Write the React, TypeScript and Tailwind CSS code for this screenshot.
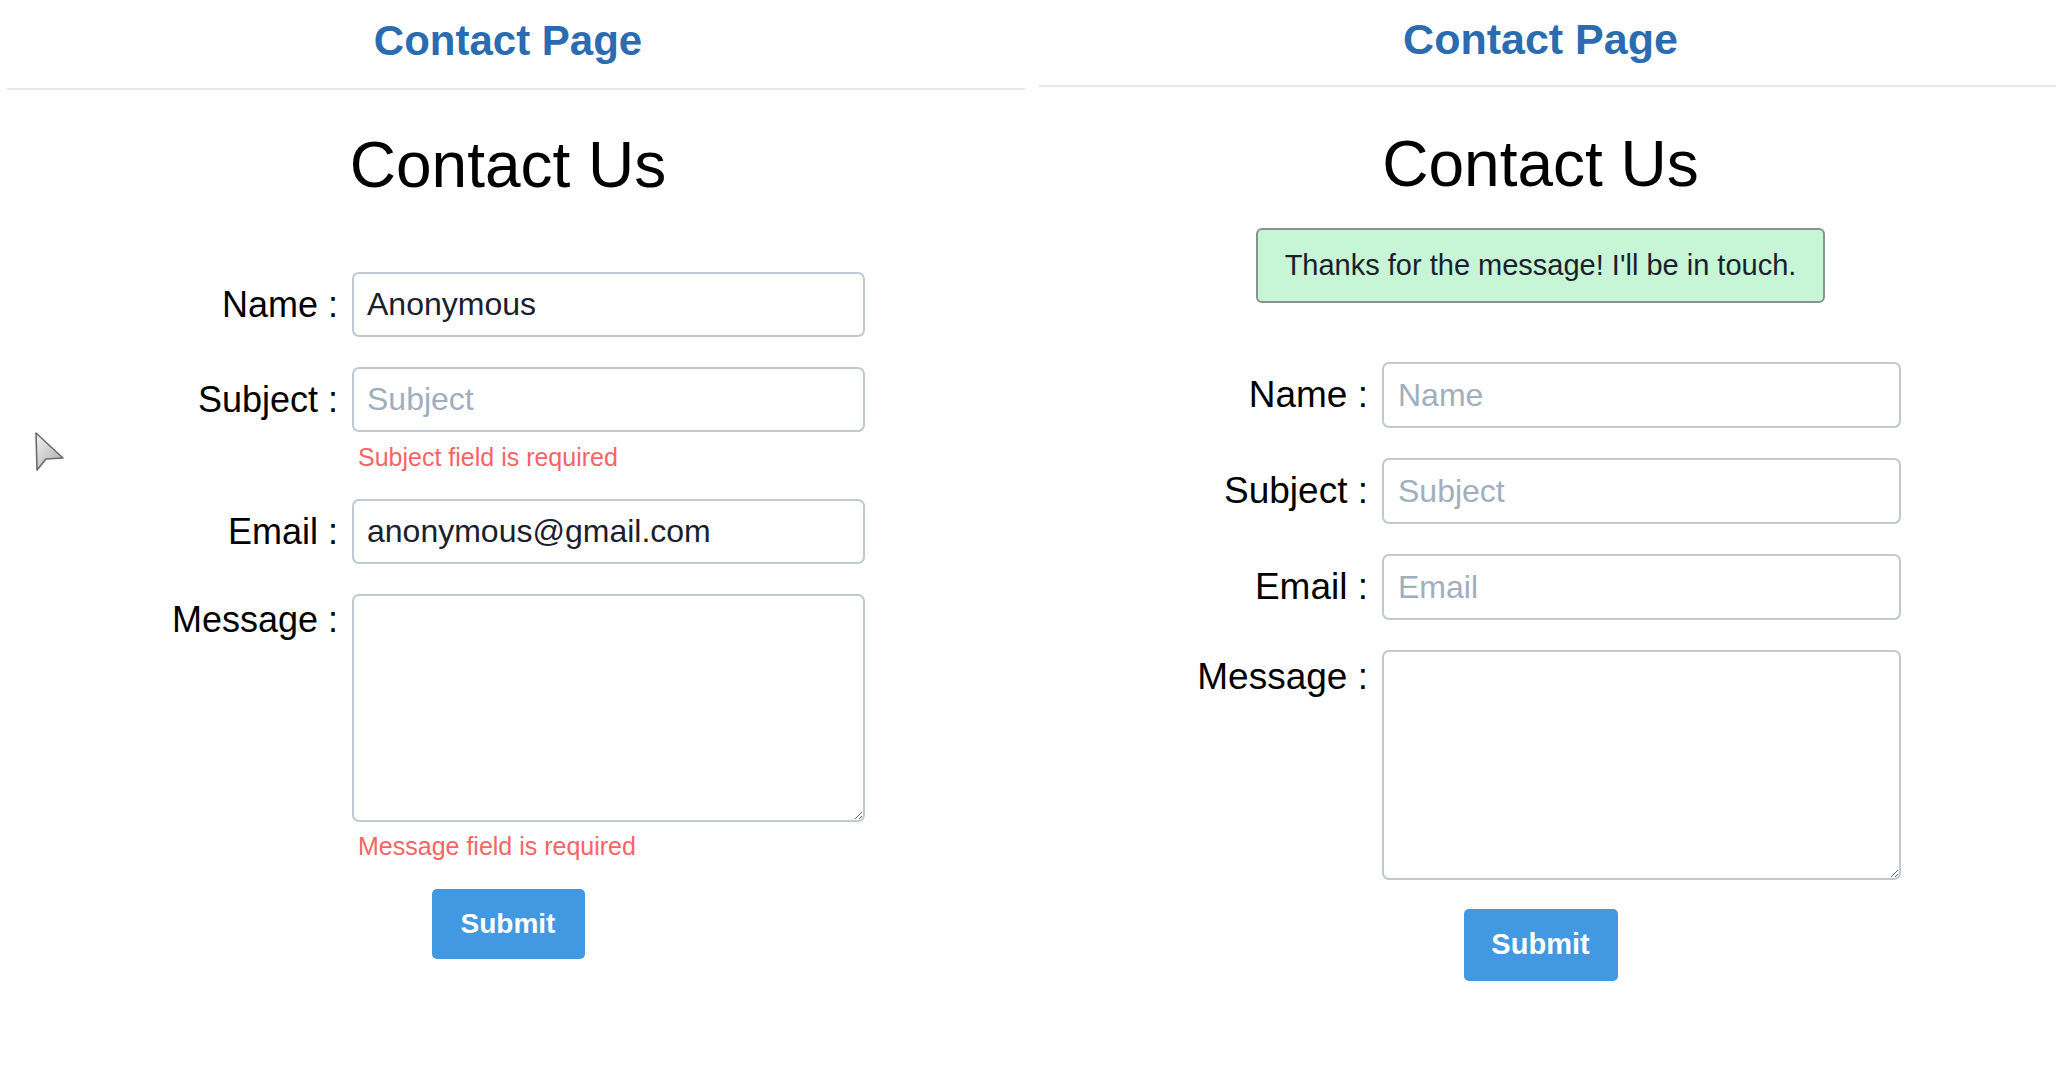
import React from "react";

const FONT = "font-['Liberation_Sans',Arial,sans-serif]";

function Cursor() {
  return (
    <svg
      className="absolute left-[33px] top-[431px]"
      width="34"
      height="42"
      viewBox="0 0 34 42"
    >
      <defs>
        <linearGradient id="cur" x1="0" y1="0" x2="1" y2="1">
          <stop offset="0" stopColor="#f2f2f2" />
          <stop offset="1" stopColor="#a9a9a9" />
        </linearGradient>
      </defs>
      <path
        d="M3 2 L4 39 L13 28 L30 27 Z"
        fill="url(#cur)"
        stroke="#6b6b6b"
        strokeWidth="1.6"
        strokeLinejoin="round"
      />
    </svg>
  );
}

// left screenshot: form with validation errors
function LeftPanel() {
  return (
    <section className="w-[1032px] shrink-0 px-[7px]">
      <div className="w-[1002px]">
        <h1 className="pt-[17px] text-center text-[42px] font-bold leading-[48px] text-[#2b6cb0]">
          Contact Page
        </h1>
      </div>
      <div className="mt-[23px] h-[2px] bg-[#e6e8eb]" />

      <form className="w-[1002px]" onSubmit={(e) => e.preventDefault()}>
        <h2 className="mt-[38px] text-center text-[64px] leading-[74px] text-black">Contact Us</h2>

        <div className="ml-[151px] mt-[70px]">
          <div className="flex items-center">
            <label className="w-[180px] text-right text-[36px] leading-[40px] text-black">Name :</label>
            <input
              defaultValue="Anonymous"
              placeholder="Name"
              className="ml-[14px] h-[65px] w-[513px] rounded-[7px] border-2 border-[#c0c8d4] pl-[13px] text-[32px] text-[#1a202c] outline-none placeholder:text-[#a0aec0]"
            />
          </div>

          <div className="mt-[30px] flex items-center">
            <label className="w-[180px] text-right text-[36px] leading-[40px] text-black">Subject :</label>
            <input
              placeholder="Subject"
              className="ml-[14px] h-[65px] w-[513px] rounded-[7px] border-2 border-[#c0c8d4] pl-[13px] text-[32px] text-[#1a202c] outline-none placeholder:text-[#a0aec0]"
            />
          </div>
          <p className="ml-[200px] mt-[11px] text-[25px] leading-[29px] text-[#f56565]">Subject field is required</p>

          <div className="mt-[27px] flex items-center">
            <label className="w-[180px] text-right text-[36px] leading-[40px] text-black">Email :</label>
            <input
              defaultValue="anonymous@gmail.com"
              placeholder="Email"
              className="ml-[14px] h-[65px] w-[513px] rounded-[7px] border-2 border-[#c0c8d4] pl-[13px] text-[32px] text-[#1a202c] outline-none placeholder:text-[#a0aec0]"
            />
          </div>

          <div className="mt-[30px] flex items-start">
            <label className="w-[180px] pt-[6px] text-right text-[36px] leading-[40px] text-black">Message :</label>
            <textarea className="ml-[14px] h-[228px] w-[513px] rounded-[7px] border-2 border-[#c0c8d4] p-[13px] text-[32px] text-[#1a202c] outline-none" />
          </div>
          <p className="ml-[200px] mt-[10px] text-[25px] leading-[29px] text-[#f56565]">Message field is required</p>
        </div>

        <div className="mt-[28px] flex justify-center">
          <button className="h-[70px] w-[153px] rounded-[5px] bg-[#4299e1] text-[28px] font-bold text-white">Submit</button>
        </div>
      </form>
    </section>
  );
}

// right screenshot: after a successful send
function RightPanel() {
  return (
    <section className="flex-1 px-[7px]">
      <div className="w-[1003px]">
        <h1 className="pt-[15px] text-center text-[43px] font-bold leading-[48px] text-[#2b6cb0]">
          Contact Page
        </h1>
      </div>
      <div className="mt-[22px] h-[2px] bg-[#e6e8eb]" />

      <form className="w-[1003px]" onSubmit={(e) => e.preventDefault()}>
        <h2 className="mt-[40px] text-center text-[64px] leading-[74px] text-black">Contact Us</h2>

        <div className="mt-[27px] flex justify-center">
          <div className="flex h-[75px] w-[569px] items-center justify-center rounded-[6px] border-2 border-[#84948f] bg-[#c6f6d5] text-[29px] text-[#1a202c]">
            Thanks for the message! I'll be in touch.
          </div>
        </div>

        <div className="ml-[149px] mt-[59px]">
          <div className="flex items-center">
            <label className="w-[180px] text-right text-[37px] leading-[40px] text-black">Name :</label>
            <input
              placeholder="Name"
              className="ml-[14px] h-[66px] w-[519px] rounded-[7px] border-2 border-[#c0c8d4] pl-[14px] text-[32px] text-[#1a202c] outline-none placeholder:text-[#a0aec0]"
            />
          </div>

          <div className="mt-[30px] flex items-center">
            <label className="w-[180px] text-right text-[37px] leading-[40px] text-black">Subject :</label>
            <input
              placeholder="Subject"
              className="ml-[14px] h-[66px] w-[519px] rounded-[7px] border-2 border-[#c0c8d4] pl-[14px] text-[32px] text-[#1a202c] outline-none placeholder:text-[#a0aec0]"
            />
          </div>

          <div className="mt-[30px] flex items-center">
            <label className="w-[180px] text-right text-[37px] leading-[40px] text-black">Email :</label>
            <input
              placeholder="Email"
              className="ml-[14px] h-[66px] w-[519px] rounded-[7px] border-2 border-[#c0c8d4] pl-[14px] text-[32px] text-[#1a202c] outline-none placeholder:text-[#a0aec0]"
            />
          </div>

          <div className="mt-[30px] flex items-start">
            <label className="w-[180px] pt-[7px] text-right text-[37px] leading-[40px] text-black">Message :</label>
            <textarea className="ml-[14px] h-[230px] w-[519px] rounded-[7px] border-2 border-[#c0c8d4] p-[14px] text-[32px] text-[#1a202c] outline-none" />
          </div>
        </div>

        <div className="mt-[29px] flex justify-center">
          <button className="h-[72px] w-[154px] rounded-[5px] bg-[#4299e1] text-[29px] font-bold text-white">Submit</button>
        </div>
      </form>
    </section>
  );
}

export default function App() {
  return (
    <div className={`relative flex h-[1067px] w-full overflow-hidden bg-white ${FONT}`}>
      <LeftPanel />
      <RightPanel />
      <Cursor />
    </div>
  );
}
